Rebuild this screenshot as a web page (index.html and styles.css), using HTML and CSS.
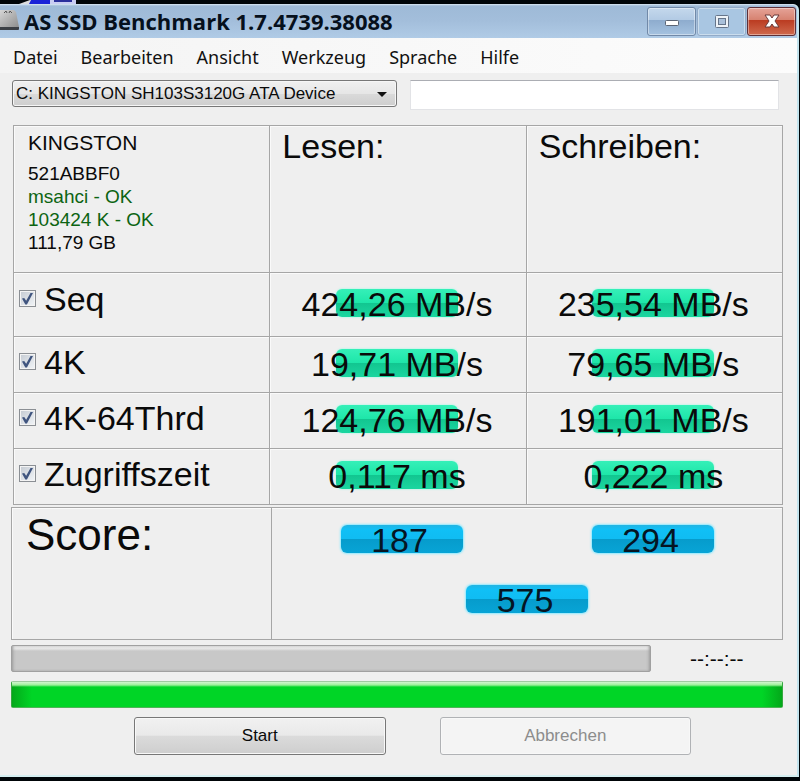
FILE: index.html
```html
<!DOCTYPE html>
<html lang="de">
<head>
    <meta charset="UTF-8">
    <meta name="viewport" content="width=device-width, initial-scale=1.0">
    <title>AS SSD Benchmark 1.7.4739.38088</title>
    <link rel="stylesheet" href="styles.css">
</head>
<body>
    <div class="desktop">
        <svg width="80" height="4" viewBox="0 0 80 4" aria-hidden="true">
            <path d="M19 4 L30 0 H32 V4 Z" fill="#ddd"/>
            <path d="M31 0 H50 V4 H29 Z" fill="#1a22d8"/>
            <path d="M50 0 H76 V4 H50 Z" fill="#c9cdf2"/>
            <path d="M54 0 H72 V2 H54 Z" fill="#2a2f9c"/>
        </svg>
    </div>

    <div class="window">
        <header class="titlebar">
            <svg class="drive" width="20" height="24" viewBox="0 0 20 24" aria-hidden="true">
                <defs>
                    <linearGradient id="metal" x1="0" y1="0" x2="1" y2="1">
                        <stop offset="0" stop-color="#d6d6d6"/>
                        <stop offset="1" stop-color="#8e8e8e"/>
                    </linearGradient>
                </defs>
                <path d="M0 1 H14 L16 3 L19 18 H0 Z" fill="url(#metal)"/>
                <path d="M0 18 H19 V20 Q19 21 18 21 H0 Z" fill="#3c4046"/>
                <path d="M4 4 L6 2 L7 4 M9 4 L10 2 L12 4" stroke="#555" fill="none"/>
            </svg>
            <h1>AS SSD Benchmark 1.7.4739.38088</h1>
            <div class="window-buttons">
                <button type="button" class="min" aria-label="Minimieren">
                    <svg width="16" height="16" viewBox="0 0 16 16"><rect x="1.5" y="7.5" width="13" height="5" rx="1" fill="#fff" stroke="#5b6575"/></svg>
                </button>
                <button type="button" class="max" aria-label="Maximieren">
                    <svg width="16" height="16" viewBox="0 0 16 16"><rect x="1.5" y="2.5" width="13" height="12" rx="1" fill="#eef3f8" stroke="#66758a"/><rect x="4.5" y="5.5" width="7" height="6" fill="#a9c0da" stroke="#66758a"/></svg>
                </button>
                <button type="button" class="close" aria-label="Schließen">
                    <svg width="16" height="16" viewBox="0 0 16 16"><path d="M1 2 H6 L8 5 L10 2 H15 L11 8 L15 14 H10 L8 11 L6 14 H1 L5 8 Z" fill="#fff" stroke="#6b3a3a" stroke-linejoin="round"/></svg>
                </button>
            </div>
        </header>

        <nav class="menu">
            <a href="#">Datei</a>
            <a href="#">Bearbeiten</a>
            <a href="#">Ansicht</a>
            <a href="#">Werkzeug</a>
            <a href="#">Sprache</a>
            <a href="#">Hilfe</a>
        </nav>

        <main>
            <div class="toolbar">
                <div class="drive-select">
                    <select aria-label="Laufwerk">
                        <option>C: KINGSTON SH103S3120G ATA Device</option>
                    </select>
                </div>
                <input type="text" class="note" aria-label="Notiz">
            </div>

            <table class="results">
                <thead>
                    <tr>
                        <td class="info">
                            <div class="model">KINGSTON</div>
                            <div>521ABBF0</div>
                            <div class="ok">msahci - OK</div>
                            <div class="ok">103424 K - OK</div>
                            <div>111,79 GB</div>
                        </td>
                        <th scope="col">Lesen:</th>
                        <th scope="col">Schreiben:</th>
                    </tr>
                </thead>
                <tbody>
                    <tr class="seq">
                        <th scope="row"><label><input type="checkbox" checked> Seq</label></th>
                        <td><span class="pill">424,26 MB/s</span></td>
                        <td><span class="pill">235,54 MB/s</span></td>
                    </tr>
                    <tr>
                        <th scope="row"><label><input type="checkbox" checked> 4K</label></th>
                        <td><span class="pill">19,71 MB/s</span></td>
                        <td><span class="pill">79,65 MB/s</span></td>
                    </tr>
                    <tr>
                        <th scope="row"><label><input type="checkbox" checked> 4K-64Thrd</label></th>
                        <td><span class="pill">124,76 MB/s</span></td>
                        <td><span class="pill">191,01 MB/s</span></td>
                    </tr>
                    <tr>
                        <th scope="row"><label><input type="checkbox" checked> Zugriffszeit</label></th>
                        <td><span class="pill">0,117 ms</span></td>
                        <td><span class="pill">0,222 ms</span></td>
                    </tr>
                </tbody>
            </table>

            <section class="score">
                <h2>Score:</h2>
                <div class="score-values">
                    <span class="pill blue">187</span>
                    <span class="pill blue">294</span>
                    <span class="pill blue total">575</span>
                </div>
            </section>

            <div class="step">
                <progress class="gray" max="100" value="0" aria-label="Aktueller Test"></progress>
                <span class="time">--:--:--</span>
            </div>
            <progress class="green" max="100" value="100" aria-label="Gesamt"></progress>

            <div class="actions">
                <button type="button">Start</button>
                <button type="button" disabled>Abbrechen</button>
            </div>
        </main>
    </div>
</body>
</html>
```
FILE: styles.css
```css
* {
    box-sizing: border-box;
}
body {
    margin: 0;
    min-height: 100vh;
    display: flex;
    flex-direction: column;
    padding: 0 1px 5px 0;
    background: #000508;
    color: #0a0a0a;
    font-family: "Liberation Sans", Arial, sans-serif;
}
button, input, select {
    font-family: inherit;
    color: inherit;
}
.desktop {
    height: 4px;
}
.desktop svg {
    display: block;
}
.window {
    flex: 1;
    background: #efefef;
    border-right: 2px solid #c3e4ee;
    border-bottom: 2px solid #d5eef0;
    border-radius: 0 6px 0 0;
}

/* title bar */
.titlebar {
    display: flex;
    align-items: center;
    height: 34px;
    padding-right: 1px;
    background: linear-gradient(#dbe8f4, #9ebad7 2px, #a3bedb 50%, #b0cbe6);
    border-radius: 0 6px 0 0;
}
.titlebar h1 {
    flex: 1;
    margin: 0 0 0 4px;
    font: bold 22px/30px "Open Sans", sans-serif;
    color: #06101c;
    white-space: nowrap;
}
.window-buttons {
    display: flex;
    gap: 1px;
}
.window-buttons button {
    display: flex;
    align-items: center;
    justify-content: center;
    width: 49px;
    height: 29px;
    padding: 0;
    border: 1px solid #7189a8;
    border-radius: 3px;
    background: linear-gradient(#c4d8ec, #b2cae4 45%, #8eacce 46%, #a5c2e0);
    box-shadow: inset 0 0 0 1px rgba(255, 255, 255, 0.4);
}
.window-buttons .max {
    border-color: #93abc8;
    background: #a9c6e2;
}
.window-buttons .close {
    border-color: #5e3038;
    background: linear-gradient(#e5a398, #d6816f 45%, #bb3c22 46%, #cf6a4e);
}

/* menu */
.menu {
    display: flex;
    gap: 23px;
    height: 35px;
    padding: 0 13px;
    background: linear-gradient(90deg, #f4f4f4, #fcfcfc);
}
.menu a {
    font: 18px/38px "Noto Sans", sans-serif;
    color: #111;
    text-decoration: none;
}

main {
    padding: 7px 14px 20px 11px;
}

/* drive and note */
.toolbar {
    display: grid;
    grid-template-columns: 386fr 369fr;
    align-items: start;
    gap: 13px;
    padding: 0 4px 0 1px;
}
.drive-select {
    position: relative;
}
.drive-select::after {
    content: "";
    position: absolute;
    top: 12px;
    right: 10px;
    border: 5px solid transparent;
    border-top-color: #111;
    border-bottom: 0;
    pointer-events: none;
}
.drive-select select {
    display: block;
    width: 100%;
    height: 27px;
    padding: 0 3px;
    appearance: none;
    border: 1px solid #777;
    border-radius: 3px;
    background: linear-gradient(#f0f0f0, #e6e6e6 50%, #dadada 51%, #cecece);
    box-shadow: inset 0 0 0 1px #f6f6f6;
    font-size: 17px;
}
.note {
    width: 100%;
    height: 30px;
    border: 1px solid #e2e3e6;
    border-top-color: #abadb3;
    background: #fff;
    font-size: 17px;
}

/* results */
.results {
    width: calc(100% - 2px);
    margin: 15px 0 2px 2px;
    table-layout: fixed;
    border-collapse: collapse;
}
.results td, .results th {
    height: 56px;
    padding: 0 2px 4px 0;
    border: 1px solid #a6a6a6;
    box-shadow: inset 1px 1px 0 #fafafa;
    font-size: 34px;
    font-weight: normal;
    line-height: 40px;
    text-align: center;
}
.results thead td, .results thead th {
    height: 147px;
    vertical-align: top;
    text-align: left;
}
.results thead th {
    padding-left: 12px;
}
.results .info {
    padding: 4px 0 0 14px;
    font-size: 19px;
    line-height: 23px;
}
.info .model {
    padding-bottom: 6px;
    font-size: 21px;
    line-height: 26px;
}
.info .ok {
    color: #0c6412;
}
.results tbody th {
    padding: 0 0 6px 5px;
    text-align: left;
}
.results .seq td, .results .seq th {
    height: 64px;
}
.results .seq th {
    padding-bottom: 12px;
}
.results label {
    display: flex;
    align-items: center;
    gap: 8px;
}
.results input {
    display: grid;
    place-items: center;
    width: 17px;
    height: 17px;
    margin: 0;
    appearance: none;
    border: 1px solid #8b8f94;
    background: linear-gradient(135deg, #c4cad2, #f2f5f8);
    box-shadow: inset 0 0 0 1px #f4f4f4;
}
.results input:checked::before {
    content: "";
    width: 11px;
    height: 12px;
    background: #40557f;
    clip-path: polygon(0 50%, 20% 45%, 38% 68%, 80% 0, 100% 5%, 45% 100%, 30% 100%);
}

/* value on a glossy bar, the bar is narrower than the long values */
.pill {
    display: flex;
    justify-content: center;
    width: 122px;
    height: 28px;
    border-radius: 6px;
    background: linear-gradient(#35f0b8, #1ee6a9 50%, #12c690 51%, #1bd6a0);
    box-shadow: 0 0 2px #7dffe0;
    font-size: 34px;
    line-height: 30px;
    white-space: nowrap;
}
.results .pill {
    margin: 0 auto;
}
.pill.blue {
    padding-right: 4px;
    background: linear-gradient(#22b4e2, #10c0f6 15%, #10bcf2 50%, #069ccc 51%, #08a4d6);
    box-shadow: 0 0 2px 1px #8eeaff;
    color: #051523;
}

/* score */
.score {
    display: grid;
    grid-template-columns: 260fr 510fr;
    height: 133px;
    border: 1px solid #a6a6a6;
    box-shadow: inset 1px 1px 0 #fafafa;
}
.score h2 {
    margin: 0;
    padding-left: 14px;
    border-right: 1px solid #a6a6a6;
    font-size: 44px;
    font-weight: normal;
    line-height: 54px;
}
.score-values {
    display: grid;
    grid-template-columns: 1fr 1fr;
    justify-items: center;
    align-content: start;
    row-gap: 32px;
    padding: 17px 4px 0;
}
.score-values .total {
    grid-column: 1 / 3;
}

/* progress */
.step {
    display: flex;
    align-items: center;
    margin: 5px 0 9px;
}
progress {
    display: block;
    appearance: none;
    width: 100%;
    height: 27px;
    border: 1px solid #a0a0a0;
    border-radius: 2px;
}
.step progress {
    flex: 640;
}
.time {
    flex: 133;
    font-size: 21px;
    text-align: center;
}
progress::-webkit-progress-bar {
    background: linear-gradient(#f2f2f2, #e2e2e2 3px, #c8c8c8 5px, #c8c8c8);
    box-shadow: inset 2px 0 3px -1px #999, inset -2px 0 3px -1px #999;
}
progress.green {
    border-color: #9fc9a0 #35a83f #4fb457;
}
progress::-webkit-progress-value {
    background:
        linear-gradient(#d2f5cf, #9df09a 3px, transparent 5px),
        linear-gradient(90deg, #04a81a, #00d526 20px, #00d526 calc(100% - 20px), #04a81a);
}

/* buttons */
.actions {
    display: grid;
    grid-template-columns: 1fr 1fr;
    gap: 54px;
    margin-top: 9px;
    padding: 0 92px 0 123px;
}
.actions button {
    height: 38px;
    border: 1px solid #777;
    border-radius: 3px;
    background: linear-gradient(#f1f1f1, #e9e9e9 48%, #dbdbdb 50%, #cecece);
    box-shadow: inset 0 0 0 1px #f8f8f8;
    font-size: 17px;
}
.actions button:disabled {
    border-color: #b0b2b5;
    background: #f4f4f4;
    color: #8c8c8c;
}
```
